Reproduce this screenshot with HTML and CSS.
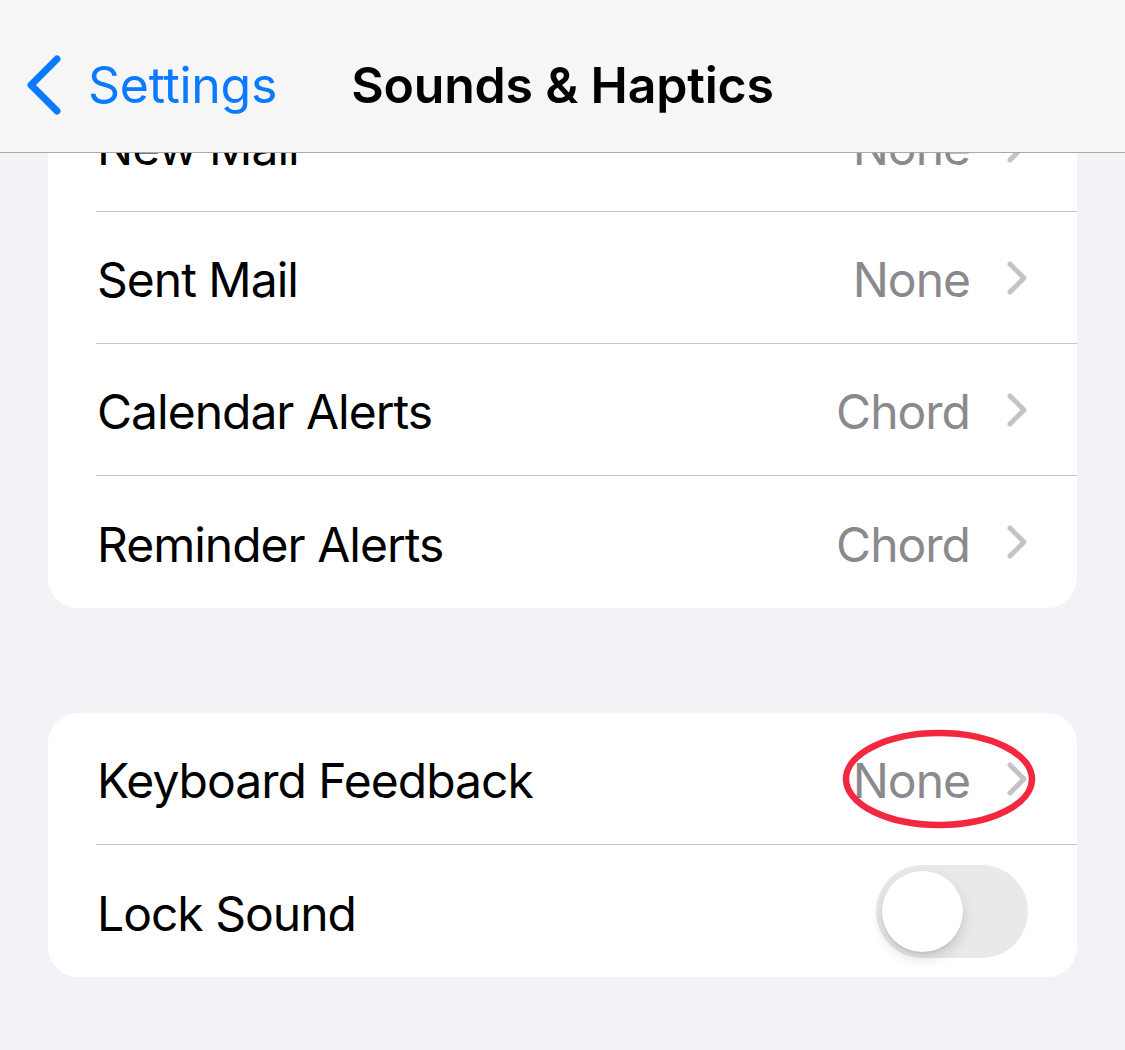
FILE: index.html
```html
<!DOCTYPE html>
<html lang="en">
<head>
<meta charset="utf-8">
<title>Sounds &amp; Haptics</title>
<link rel="stylesheet" href="styles.css">
</head>
<body>
<header class="navbar">
  <div class="nav-back">
    <svg class="back-chevron" width="40" height="62" viewBox="0 0 40 62" aria-hidden="true">
      <polyline points="32,5 6,31 32,57" fill="none" stroke="#0a7aff" stroke-width="7" stroke-linecap="round" stroke-linejoin="round"/>
    </svg>
    <span class="back-label">Settings</span>
  </div>
  <div class="nav-title">Sounds &amp; Haptics</div>
  <div class="nav-spacer"></div>
</header>

<main class="content">
  <section class="card">
    <div class="row"><span class="label">New Mail</span><span class="value">None</span><span class="chev"></span></div>
    <div class="row"><span class="label">Sent Mail</span><span class="value">None</span><span class="chev"></span></div>
    <div class="row"><span class="label">Calendar Alerts</span><span class="value">Chord</span><span class="chev"></span></div>
    <div class="row"><span class="label">Reminder Alerts</span><span class="value">Chord</span><span class="chev"></span></div>
  </section>

  <section class="card card-second">
    <div class="row"><span class="label">Keyboard Feedback</span><span class="value">None</span><span class="chev"></span></div>
    <div class="row"><span class="label">Lock Sound</span><span class="toggle"><span class="knob"></span></span></div>
    <svg class="annotation" width="200" height="104" viewBox="0 0 200 104" aria-hidden="true">
      <ellipse cx="100" cy="52" rx="93" ry="46" fill="none" stroke="#f2283f" stroke-width="6.5"/>
    </svg>
  </section>
</main>
</body>
</html>
```
FILE: styles.css
```css
* { box-sizing: border-box; }

html, body {
  margin: 0;
  padding: 0;
  background: #f2f2f7;
  font-family: Inter, "Noto Sans", "Liberation Sans", sans-serif;
  color: #000;
  width: 1125px;
  height: 1050px;
  overflow: hidden;
}

.navbar {
  position: fixed;
  top: 0;
  left: 0;
  width: 1125px;
  height: 153px;
  padding-top: 18px;
  background: #f6f6f6;
  border-bottom: 1px solid #a9a9ab;
  display: grid;
  grid-template-columns: 1fr auto 1fr;
  align-items: center;
  z-index: 10;
}

.nav-back {
  display: flex;
  align-items: center;
  padding-left: 25px;
  gap: 23px;
}

.back-chevron { display: block; }

.back-label {
  color: #0a7aff;
  font-size: 50px;
  letter-spacing: -0.3px;
}

.nav-title {
  font-size: 50px;
  font-weight: 600;
  letter-spacing: -0.2px;
}

.content {
  padding: 80px 48px 0;
}

.card {
  background: #fff;
  border-radius: 30px;
  padding-left: 48px;
}

.card-second {
  position: relative;
  margin-top: 105px;
}

.row {
  height: 132px;
  display: flex;
  align-items: center;
  padding-top: 4px;
  padding-right: 49px;
  border-bottom: 1px solid #c8c8cc;
}

.row:last-of-type { border-bottom: none; }

.label {
  flex: 1;
  font-size: 48px;
  padding-left: 1px;
  letter-spacing: -1px;
}

.value {
  font-size: 48px;
  color: #8a8a8e;
  letter-spacing: -1px;
  margin-right: 37px;
}

.chev {
  width: 21px;
  height: 34px;
  margin-top: -4px;
  background: no-repeat center/contain url("data:image/svg+xml,%3Csvg xmlns='http://www.w3.org/2000/svg' viewBox='0 0 21 34'%3E%3Cpolyline points='3,3 17,17 3,31' fill='none' stroke='%23c4c4c7' stroke-width='5' stroke-linecap='round' stroke-linejoin='round'/%3E%3C/svg%3E");
}

.toggle {
  width: 152px;
  height: 93px;
  margin-top: -4px;
  border-radius: 47px;
  background: #e9e9eb;
  padding: 6px;
  display: flex;
  align-items: center;
}

.knob {
  width: 81px;
  height: 81px;
  border-radius: 50%;
  background: #fff;
  box-shadow: 0 6px 14px rgba(0,0,0,0.15), 0 2px 2px rgba(0,0,0,0.06);
}

.annotation {
  position: absolute;
  left: 791px;
  top: 14px;
}
```
